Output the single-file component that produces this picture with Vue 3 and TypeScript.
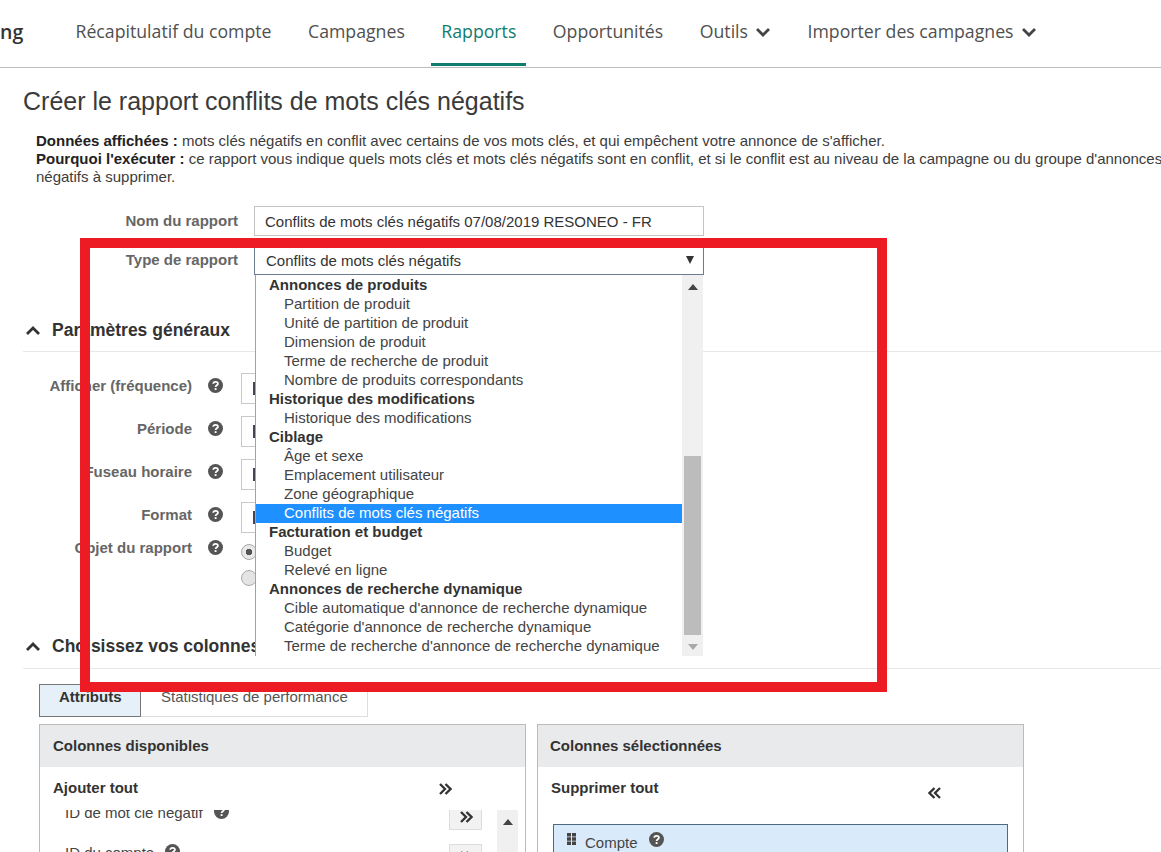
<script setup lang="ts">
interface Option { label: string; group?: boolean; selected?: boolean }
const tabs = [
  { label: 'Récapitulatif du compte' },
  { label: 'Campagnes' },
  { label: 'Rapports', active: true },
  { label: 'Opportunités' },
  { label: 'Outils', menu: true },
  { label: 'Importer des campagnes', menu: true },
]
const options: Option[] = [
  { label: 'Annonces de produits', group: true },
  { label: 'Partition de produit' },
  { label: 'Unité de partition de produit' },
  { label: 'Dimension de produit' },
  { label: 'Terme de recherche de produit' },
  { label: 'Nombre de produits correspondants' },
  { label: 'Historique des modifications', group: true },
  { label: 'Historique des modifications' },
  { label: 'Ciblage', group: true },
  { label: 'Âge et sexe' },
  { label: 'Emplacement utilisateur' },
  { label: 'Zone géographique' },
  { label: 'Conflits de mots clés négatifs', selected: true },
  { label: 'Facturation et budget', group: true },
  { label: 'Budget' },
  { label: 'Relevé en ligne' },
  { label: 'Annonces de recherche dynamique', group: true },
  { label: "Cible automatique d'annonce de recherche dynamique" },
  { label: "Catégorie d'annonce de recherche dynamique" },
  { label: "Terme de recherche d'annonce de recherche dynamique" },
]
const settings = ['Afficher (fréquence)', 'Période', 'Fuseau horaire', 'Format']
const columns = ['ID de mot clé négatif', 'ID du compte']
</script>

<template>
  <div class="page">
    <nav class="nav">
      <span class="brand">ng</span>
      <a v-for="t in tabs" :key="t.label" class="tab" :class="{ active: t.active }">
        {{ t.label }}
        <svg v-if="t.menu" class="caret" width="16" height="10" viewBox="0 0 16 10">
          <path d="M2 2 L8 8 L14 2" fill="none" stroke="#444" stroke-width="2.8" />
        </svg>
      </a>
    </nav>

    <main class="main">
      <h1 class="title">Créer le rapport conflits de mots clés négatifs</h1>
      <p class="desc">
        <b>Données affichées :</b> mots clés négatifs en conflit avec certains de vos mots clés, et qui empêchent votre annonce de s'afficher.<br />
        <b>Pourquoi l'exécuter :</b> ce rapport vous indique quels mots clés et mots clés négatifs sont en conflit, et si le conflit est au niveau de la campagne ou du groupe d'annonces<br />
        négatifs à supprimer.
      </p>

      <div class="form-row name-row">
        <label class="form-label">Nom du rapport</label>
        <div class="field text-field">Conflits de mots clés négatifs 07/08/2019 RESONEO - FR</div>
      </div>
      <div class="form-row type-row">
        <label class="form-label">Type de rapport</label>
        <div class="select">
          <span>Conflits de mots clés négatifs</span>
          <span class="select-arrow"></span>
          <div class="dropdown">
            <ul class="options">
              <li
                v-for="(o, i) in options"
                :key="i"
                class="option"
                :class="{ group: o.group, selected: o.selected }"
              >{{ o.label }}</li>
            </ul>
            <div class="scrollbar">
              <span class="sb-up"></span>
              <span class="sb-thumb"></span>
              <span class="sb-down"></span>
            </div>
          </div>
        </div>
      </div>

      <section class="section general">
        <h2 class="section-head">
          <svg width="16" height="10" viewBox="0 0 16 10"><path d="M2 8 L8 2 L14 8" fill="none" stroke="#333" stroke-width="2.8" /></svg>
          Paramètres généraux
        </h2>
        <div class="settings">
          <div v-for="s in settings" :key="s" class="setting">
            <span class="setting-label">{{ s }}</span>
            <svg class="help" width="15" height="15" viewBox="0 0 16 16">
              <circle cx="8" cy="8" r="8" fill="#555" />
              <path d="M5.6 6.2 C5.6 3.4 10.6 3.4 10.6 6.1 C10.6 7.8 8.1 7.8 8.1 9.6" fill="none" stroke="#fff" stroke-width="1.9" />
              <rect x="7.1" y="10.8" width="2" height="2" fill="#fff" />
            </svg>
            <div class="setting-field"></div>
          </div>
          <div class="setting radio-setting">
            <span class="setting-label">Objet du rapport</span>
            <svg class="help" width="15" height="15" viewBox="0 0 16 16">
              <circle cx="8" cy="8" r="8" fill="#555" />
              <path d="M5.6 6.2 C5.6 3.4 10.6 3.4 10.6 6.1 C10.6 7.8 8.1 7.8 8.1 9.6" fill="none" stroke="#fff" stroke-width="1.9" />
              <rect x="7.1" y="10.8" width="2" height="2" fill="#fff" />
            </svg>
            <div class="radios">
              <span class="radio on"></span>
              <span class="radio"></span>
            </div>
          </div>
        </div>
      </section>

      <section class="section choose">
        <h2 class="section-head">
          <svg width="16" height="10" viewBox="0 0 16 10"><path d="M2 8 L8 2 L14 8" fill="none" stroke="#333" stroke-width="2.8" /></svg>
          Choisissez vos colonnes
        </h2>
        <div class="col-tabs">
          <span class="col-tab active">Attributs</span>
          <span class="col-tab">Statistiques de performance</span>
        </div>
        <div class="panels">
          <div class="panel left">
            <div class="panel-head">Colonnes disponibles</div>
            <div class="panel-action">
              <span>Ajouter tout</span>
              <svg class="dbl add-all" width="14" height="14" viewBox="0 0 14 14">
                <path d="M2 2 L7 7 L2 12 M7.5 2 L12.5 7 L7.5 12" fill="none" stroke="#333" stroke-width="2.3" />
              </svg>
            </div>
            <div class="col-list">
              <div class="col-rows">
                <div v-for="c in columns" :key="c" class="col-row">
                  <span class="col-name">{{ c }}</span>
                  <svg class="help" width="15" height="15" viewBox="0 0 16 16">
                    <circle cx="8" cy="8" r="8" fill="#555" />
                    <path d="M5.6 6.2 C5.6 3.4 10.6 3.4 10.6 6.1 C10.6 7.8 8.1 7.8 8.1 9.6" fill="none" stroke="#fff" stroke-width="1.9" />
                    <rect x="7.1" y="10.8" width="2" height="2" fill="#fff" />
                  </svg>
                  <span class="add-btn">
                    <svg width="14" height="14" viewBox="0 0 14 14">
                      <path d="M2 2 L7 7 L2 12 M7.5 2 L12.5 7 L7.5 12" fill="none" stroke="#333" stroke-width="2.3" />
                    </svg>
                  </span>
                </div>
              </div>
              <div class="list-scroll"><span class="sb-up"></span></div>
            </div>
          </div>
          <div class="panel right">
            <div class="panel-head">Colonnes sélectionnées</div>
            <div class="panel-action">
              <span>Supprimer tout</span>
              <svg class="dbl remove-all" width="14" height="14" viewBox="0 0 14 14">
                <path d="M12 2 L7 7 L12 12 M6.5 2 L1.5 7 L6.5 12" fill="none" stroke="#333" stroke-width="2.3" />
              </svg>
            </div>
            <div class="picked">
              <svg width="9" height="12" viewBox="0 0 9 12" class="grip">
                <path d="M0 0h4v3.4H0zM5 0h4v3.4H5zM0 4.3h4v3.4H0zM5 4.3h4v3.4H5zM0 8.6h4V12H0zM5 8.6h4V12H5z" fill="#444" />
              </svg>
              <span class="picked-name">Compte</span>
              <svg class="help" width="15" height="15" viewBox="0 0 16 16">
                <circle cx="8" cy="8" r="8" fill="#555" />
                <path d="M5.6 6.2 C5.6 3.4 10.6 3.4 10.6 6.1 C10.6 7.8 8.1 7.8 8.1 9.6" fill="none" stroke="#fff" stroke-width="1.9" />
                <rect x="7.1" y="10.8" width="2" height="2" fill="#fff" />
              </svg>
            </div>
          </div>
        </div>
      </section>
    </main>

    <div class="highlight"></div>
  </div>
</template>

<style>
html, body { margin: 0; background: #fff; }
</style>

<style scoped>
.page {
  position: relative;
  width: 1161px;
  height: 852px;
  overflow: hidden;
  background: #fff;
  color: #333;
  font-family: "Liberation Sans", Arial, sans-serif;
  font-size: 15px;
}
.nav {
  display: flex;
  align-items: stretch;
  height: 67px;
  border-bottom: 1px solid #bdbdbd;
  gap: 16.5px;
  font-family: "Open Sans", sans-serif;
  font-size: 17.7px;
  color: #505050;
  white-space: nowrap;
}
.brand {
  width: 39px;
  margin-right: 10px;
  line-height: 63px;
  font-size: 19.5px;
  font-weight: 600;
  color: #333;
}
.tab {
  display: flex;
  align-items: center;
  gap: 7px;
  box-sizing: border-box;
  height: 66px;
  padding: 0 10px 1px;
  border-bottom: 3px solid transparent;
}
.tab.active { color: #107c6e; border-bottom-color: #107c6e; }
.caret { margin-top: 1px; }
.title {
  margin: 19px 0 0 23px;
  font-size: 25px;
  line-height: 28px;
  font-weight: 400;
  color: #3a3a3a;
}
.desc {
  margin: 17px 0 0 36px;
  line-height: 18px;
  white-space: nowrap;
  color: #3c3c3c;
}
.desc b { color: #222; }
.form-row { display: flex; align-items: flex-start; }
.name-row { margin-top: 20px; }
.type-row { margin-top: 11px; }
.form-label {
  width: 254px;
  padding-right: 16px;
  box-sizing: border-box;
  text-align: right;
  font-weight: 700;
  color: #666;
  line-height: 30px;
}
.type-row .form-label { line-height: 26px; }
.field, .select {
  box-sizing: border-box;
  width: 450px;
}
.text-field {
  height: 30px;
  line-height: 29px;
  padding-left: 10px;
  border: 1px solid #c4c4c4;
}
.select {
  position: relative;
  height: 28px;
  line-height: 25px;
  padding-left: 11px;
  border: 1px solid #6d7c8c;
}
.select-arrow {
  position: absolute;
  right: 9px;
  top: 8px;
  border-left: 4px solid transparent;
  border-right: 4px solid transparent;
  border-top: 8px solid #333;
}
.dropdown {
  position: absolute;
  left: 0;
  top: 27px;
  z-index: 2;
  display: flex;
  width: 448px;
  height: 381px;
  background: #fff;
  border-left: 1px solid #8fa5c0;
  box-sizing: border-box;
  overflow: hidden;
}
.options { flex: 1; margin: 0; padding: 1px 0 0; list-style: none; }
.option {
  height: 19px;
  line-height: 18px;
  padding-left: 28px;
  color: #444;
  white-space: nowrap;
}
.option.group { padding-left: 13px; font-weight: 700; color: #333; }
.option.selected { background: #1e90ff; color: #fff; }
.scrollbar {
  position: relative;
  flex: 0 0 21px;
  background: #f0f0f0;
}
.sb-up, .sb-down {
  position: absolute;
  left: 6px;
  border-left: 5px solid transparent;
  border-right: 5px solid transparent;
}
.sb-up { top: 9px; border-bottom: 6px solid #444; }
.sb-down { bottom: 6px; border-top: 6px solid #a8a8a8; }
.sb-thumb {
  position: absolute;
  left: 2px;
  right: 2px;
  top: 181px;
  height: 179px;
  background: #bcbcbc;
}
.section { margin-left: 23px; }
.section-head {
  display: flex;
  align-items: center;
  gap: 11px;
  margin: 0;
  height: 42px;
  padding-left: 2px;
  box-sizing: border-box;
  font-size: 17.5px;
  font-weight: 700;
  color: #333;
  border-bottom: 1px solid #e8e8e8;
}
.general { margin-top: 35px; }
.settings { margin-top: 21px; }
.setting {
  display: flex;
  align-items: flex-start;
  margin-top: 12px;
}
.setting:first-child { margin-top: 0; }
.setting-label {
  width: 169px;
  text-align: right;
  font-weight: 700;
  color: #666;
  line-height: 26px;
  white-space: nowrap;
}
.help { flex: none; }
.setting > .help { margin: 5px 0 0 16px; }
.setting-field {
  position: relative;
  box-sizing: border-box;
  width: 400px;
  height: 31px;
  margin-left: 18px;
  border: 1px solid #c8c8c8;
}
.setting-field::before {
  content: "";
  position: absolute;
  left: 11px;
  top: 8px;
  width: 2px;
  height: 13px;
  background: #445;
}
.radio-setting { margin-top: 2px; }
.radios {
  display: flex;
  flex-direction: column;
  gap: 10px;
  margin: 9px 0 0 18px;
}
.radio {
  box-sizing: border-box;
  width: 16px;
  height: 16px;
  border: 1px solid #aaa;
  border-radius: 50%;
  background: #e4e4e4;
}
.radio.on { background: radial-gradient(circle, #555 0 3px, #e8e8e8 3.5px); }
.choose { margin-top: 39px; }
.choose .section-head { height: 44px; }
.col-tabs { display: flex; margin: 15px 0 0 16px; }
.col-tab {
  box-sizing: border-box;
  height: 33px;
  line-height: 24px;
  padding: 0 0 0 20px;
  border: 1px solid #ddd;
  border-left: 0;
  color: #555;
}
.col-tab:last-child { width: 227px; }
.col-tab.active {
  width: 102px;
  padding-left: 19px;
  border: 1px solid #777;
  background: #e6f0f8;
  font-weight: 700;
  color: #333;
}
.panels { display: flex; gap: 11px; margin: 7px 0 0 16px; }
.panel {
  box-sizing: border-box;
  width: 487px;
  height: 200px;
  border: 1px solid #bbb;
}
.panel-head {
  height: 42px;
  line-height: 42px;
  padding-left: 13px;
  background: #e9eaec;
  font-weight: 700;
  color: #333;
}
.right .panel-head { padding-left: 12px; }
.panel-action {
  position: relative;
  height: 43px;
  line-height: 42px;
  padding-left: 13px;
  font-weight: 700;
  color: #333;
}
.dbl { position: absolute; top: 15px; }
.add-all { left: 398px; }
.remove-all { left: 390px; top: 19px; }
.col-list {
  display: flex;
  height: 42px;
  overflow: hidden;
}
.col-rows { flex: 1; margin-top: -6px; }
.col-row {
  position: relative;
  display: flex;
  align-items: flex-start;
  gap: 11px;
  height: 40px;
  padding-left: 25px;
  color: #444;
}
.col-name { line-height: 17px; }
.add-btn {
  position: absolute;
  left: 409px;
  top: 0;
  display: flex;
  align-items: center;
  justify-content: center;
  box-sizing: border-box;
  width: 33px;
  height: 26px;
  background: #f2f2f2;
  border: 1px solid #ddd;
}
.list-scroll {
  position: relative;
  flex: 0 0 21px;
  height: 42px;
  margin-right: 7px;
  margin-left: 16px;
  background: #f0f0f0;
}
.picked {
  display: flex;
  align-items: flex-start;
  box-sizing: border-box;
  height: 60px;
  margin: 14px 15px 0;
  padding: 8px 0 0 13px;
  background: #d9ebfb;
  border: 1px solid #4d6a80;
  color: #444;
}
.picked-name { margin: 0 11px 0 9px; line-height: 20px; }
.picked .help { margin-top: -1px; }
.highlight {
  position: absolute;
  left: 80px;
  top: 238px;
  width: 807px;
  height: 454px;
  box-sizing: border-box;
  border: 10px solid #ed1c24;
  z-index: 3;
  pointer-events: none;
}
</style>
